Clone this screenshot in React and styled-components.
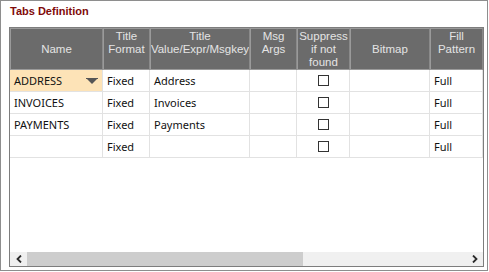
import React from "react";
import styled, { createGlobalStyle } from "styled-components";

const Global = createGlobalStyle`
  html, body { margin: 0; padding: 0; background: #ffffff; }
  body { width: 489px; height: 272px; overflow: hidden; }
`;

const COLS = "93px 47px 100px 47px 53px 80px 53px";

const Frame = styled.div`
  width: 488px;
  height: 271px;
  box-sizing: border-box;
  border: 1px solid #8e8e8e;
  background: #ffffff;
  display: flex;
  flex-direction: column;
  padding-left: 8px;
`;

const Title = styled.div`
  height: 26px;
  box-sizing: border-box;
  padding-top: 4px;
  padding-left: 1px;
  font-family: "Liberation Sans", Arial, sans-serif;
  font-weight: bold;
  font-size: 11px;
  color: #7f0a0a;
`;

const Grid = styled.div`
  width: 475px;
  height: 240px;
  box-sizing: border-box;
  border: 1px solid #7d7d7d;
  display: flex;
  flex-direction: column;
  background: #ffffff;
`;

const HeaderRow = styled.div`
  display: grid;
  grid-template-columns: ${COLS};
  height: 42px;
  background: #6b6b6b;
`;

const HeaderCell = styled.div`
  box-sizing: border-box;
  border-top: 1px solid #9a9a9a;
  border-left: 1px solid #9a9a9a;
  border-right: 1px solid #8a8a8a;
  border-bottom: 1px solid #9a9a9a;
  display: flex;
  flex-direction: column;
  align-items: center;
  justify-content: ${(p) => (p.$center ? "center" : "flex-start")};
  padding-top: ${(p) => (p.$center ? "0" : "1px")};
  font-family: "Liberation Sans", Arial, sans-serif;
  font-size: 11.5px;
  line-height: 13px;
  color: #e4e4e4;
  text-align: center;
  white-space: nowrap;
  overflow: hidden;
`;

const Body = styled.div`
  flex: 1;
  display: flex;
  flex-direction: column;
`;

const Row = styled.div`
  display: grid;
  grid-template-columns: ${COLS};
  height: 22px;
`;

const Cell = styled.div`
  box-sizing: border-box;
  border-right: 1px solid #e2e2e2;
  border-bottom: 1px solid #e2e2e2;
  background: ${(p) => (p.$active ? "#fde3b7" : "#ffffff")};
  display: flex;
  align-items: center;
  justify-content: ${(p) => (p.$center ? "center" : "space-between")};
  padding: 0 ${(p) => (p.$center ? "0" : "4px")};
  font-family: "Noto Sans", "Open Sans", sans-serif;
  font-size: 11px;
  color: #111111;
  white-space: nowrap;
  overflow: hidden;
`;

const Check = styled.span`
  width: 11px;
  height: 11px;
  box-sizing: border-box;
  border: 1px solid #333333;
  background: #ffffff;
`;

const Spacer = styled.div`
  flex: 1;
`;

const ScrollBar = styled.div`
  height: 14px;
  display: flex;
  background: #f0f0f0;
`;

const Arrow = styled.div`
  width: 17px;
  display: flex;
  align-items: center;
  justify-content: center;
  color: #333;
`;

const Thumb = styled.div`
  width: 276px;
  background: #cdcdcd;
`;

const Track = styled.div`
  flex: 1;
`;

const Drop = () => (
  <svg width="12" height="6" viewBox="0 0 12 6">
    <rect x="0" y="0" width="12" height="1" fill="#555" />
    <polygon points="1,1 11,1 6,6" fill="#555" />
  </svg>
);

const Chevron = ({ dir }) => (
  <svg width="6" height="8" viewBox="0 0 6 8">
    <polyline
      points={dir === "left" ? "5,0.5 1.5,4 5,7.5" : "1,0.5 4.5,4 1,7.5"}
      fill="none"
      stroke="#2a2a2a"
      strokeWidth="1.8"
    />
  </svg>
);

const headers = [
  { lines: ["Name"], center: true },
  { lines: ["Title", "Format"] },
  { lines: ["Title", "Value/Expr/Msgkey"] },
  { lines: ["Msg", "Args"] },
  { lines: ["Suppress", "if not", "found"] },
  { lines: ["Bitmap"], center: true },
  { lines: ["Fill", "Pattern"] },
];

const rows = [
  { name: "ADDRESS", value: "Address", active: true },
  { name: "INVOICES", value: "Invoices" },
  { name: "PAYMENTS", value: "Payments" },
  { name: "", value: "" },
];

export default function App() {
  return (
    <>
      <Global />
      <Frame>
        <Title>Tabs Definition</Title>
        <Grid>
          <HeaderRow>
            {headers.map((h, i) => (
              <HeaderCell key={i} $center={h.center}>
                {h.lines.map((l) => (
                  <span key={l}>{l}</span>
                ))}
              </HeaderCell>
            ))}
          </HeaderRow>
          <Body>
            {rows.map((r, i) => (
              <Row key={i}>
                <Cell $active={r.active}>
                  <span>{r.name}</span>
                  {r.active && <Drop />}
                </Cell>
                <Cell>Fixed</Cell>
                <Cell>{r.value}</Cell>
                <Cell />
                <Cell $center>
                  <Check />
                </Cell>
                <Cell />
                <Cell>Full</Cell>
              </Row>
            ))}
            <Spacer />
            <ScrollBar>
              <Arrow>
                <Chevron dir="left" />
              </Arrow>
              <Thumb />
              <Track />
              <Arrow>
                <Chevron dir="right" />
              </Arrow>
            </ScrollBar>
          </Body>
        </Grid>
      </Frame>
    </>
  );
}
